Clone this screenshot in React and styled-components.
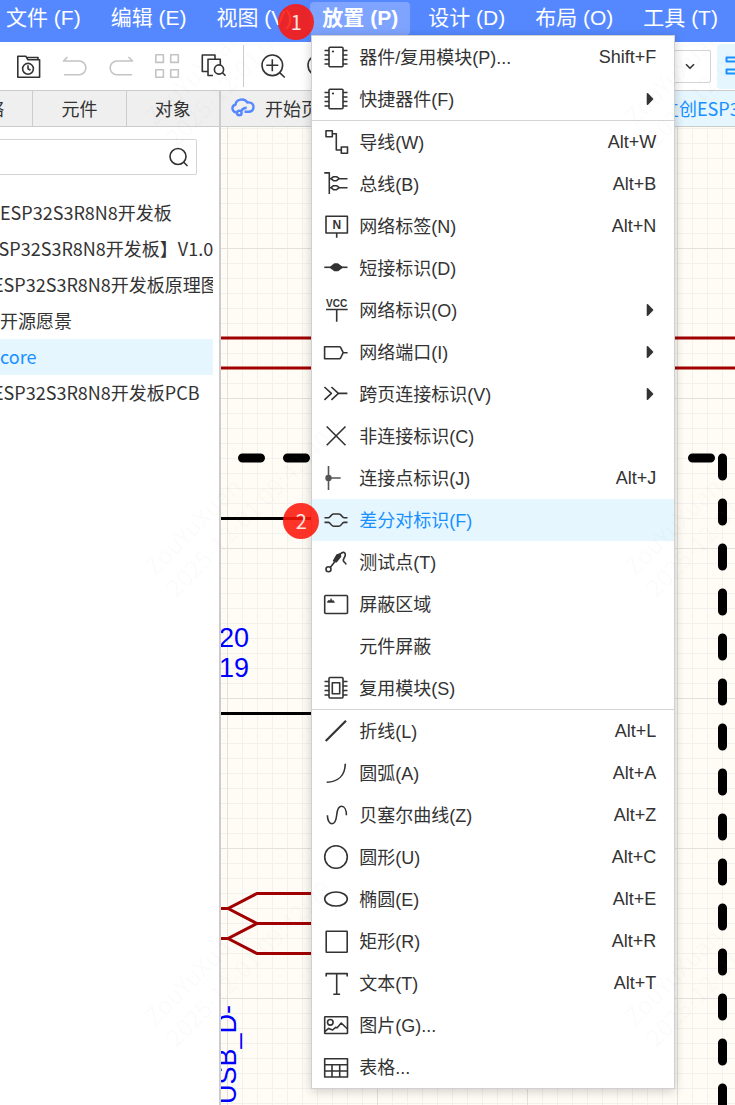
import {useState} from 'react';
import styled, {createGlobalStyle, css} from 'styled-components';

const GlobalStyle = createGlobalStyle`
    * {
        box-sizing: border-box;
    }
    body {
        margin: 0;
        color: #333;
        background: #fff;
        font-family: "Liberation Sans", "Noto Sans CJK SC", sans-serif;
        font-size: 18px;
    }
    button, input, select {
        font: inherit;
        color: inherit;
    }
`

const chipPins = 'M.5 5.5H5M.5 10H5M.5 14.5H5M.5 19H5M19 5.5h4.5M19 10h4.5M19 14.5h4.5M19 19h4.5';

const icons = {
    chip: <><rect x="5" y="2.3" width="14" height="19.4" rx="1" /><path d={chipPins} /><circle cx="9" cy="6.5" r="1.1" fill="currentColor" stroke="none" /></>,
    wire: <path d="M2 .8h6.3v6H2zM8.3 3.8h4V20h5M17.3 17h6.2v6.2h-6.2z" />,
    bus: <path d="M.3.9h5V22M5.3 6.7H7l2.5-2h3l2.8 2-2.8 2h-3L7 6.7M15.3 6.7h8.2M5.3 15.7H7l2.5-2h3l2.8 2-2.8 2h-3l-2.5-2M15.3 15.7h8.2" />,
    label: <><path d="M2 2.2h21.4V19H2zM12.7 19v4.8" /><text x="8.4" y="15" fontSize="12">N</text></>,
    short: <><path d="M.3 11.3h23.2" /><path d="M6.5 11.3l4-3.2h3.2l4.3 3.2-4.3 3.2h-3.2z" fill="currentColor" /></>,
    vcc: <><path d="M2 11.5h21.7M12.7 11.5v12.3" /><text x="2" y="9" fontSize="10">VCC</text></>,
    port: <path d="M.6 6.7h14.8q.8 0 1.2.7l2.6 5.3-2.6 5.3q-.4.7-1.2.7H.6zM19.2 12.7h4.4" />,
    offPage: <path d="M.4 5l7 6.4-7 6.4M7.4 5l7 6.4-7 6.4M14.4 11.4h9" />,
    cross: <path d="M2.7 2.5l18.8 18.8M21.5 2.5L2.7 21.3" />,
    junction: <g stroke="#555"><path d="M4.5 0v24M4.5 12h12.2" /><circle cx="4.5" cy="12" r="2.4" fill="#555" /></g>,
    pair: <path d="M.5 9.8h4C6.5 9.8 7 6 9.5 6H15c2.5 0 3 3.8 5 3.8h3.5M.5 14.4h4c2 0 2.5 3.8 5 3.8H15c2.5 0 3-3.8 5-3.8h3.5" />,
    probe: <><circle cx="4.5" cy="19.3" r="2.5" /><path d="M6.4 17.3L11 11.5M16 4.500C18 1.2 22 1.8 21.2 5.5 20.7 8 18.5 9 19.5 11.2c.6 1.4 2.1 1 2.6 3.3" /><path d="M9.6 10.8L13 5l3-1 .5 2.5-4.2 5.2z" fill="currentColor" /></>,
    region: <><rect x=".7" y="3.5" width="22.8" height="18" rx="1" /><path d="M3.5 10.5V9.3L5 8l1 1 1-2.500L8.5 9l1-.5 1 2z" fill="currentColor" strokeWidth=".5" /></>,
    module: <><rect x="5" y="1.5" width="14" height="20.5" rx="1" /><path d="M8.3 6.7h7.4v11H8.3z" /><path d={chipPins} /></>,
    line: <path d="M1.7 22L22 1.7" strokeWidth="2.2" />,
    arc: <path d="M2.7 21.2C14 21 21 14.5 21.3 2.7" />,
    bezier: <path d="M3.4 12.3c0 5 2 8.4 4.6 8.4 3 0 4.2-3.7 4.7-8.7s1.7-8.7 4.9-8.7c2.9 0 4.8 3.7 4.8 9" />,
    circle: <circle cx="12" cy="12" r="11.3" />,
    ellipse: <ellipse cx="12" cy="12" rx="11.3" ry="7" />,
    rect: <rect x="2.2" y="2.2" width="21" height="21" rx=".5" />,
    text: <path d="M2.2 5.500V2.600h21v2.900M12.7 2.600v20.800M9.3 23.300h6.8" />,
    image: <><rect x=".7" y="3.7" width="22.8" height="16.8" rx=".5" /><circle cx="6.3" cy="9.3" r="2.8" /><path d="M.7 18.600l4-3.200L8.600 17l3-2.600 1.600.4 4-4.800L23.500 16" /></>,
    table: <path d="M.7 3.700h22.800V22H.7zM.7 9.700h22.800M.7 16h22.800M8 9.700V22M15.700 9.700V22" />,
    folder: <><path d="M.8 23.300V2.200h8l2 3.500h11.800v17.600zM10 3.500h11v2.200" /><circle cx="11" cy="14.8" r="5.4" /><path d="M11 11.300v3.500l2.500 1.500" /></>,
    undo: <path d="M4.5 3L.5 7h16.300a6.900 6.900 0 0 1 0 13.700H1" />,
    redo: <path d="M19.5 3l4 4H7.200a6.900 6.900 0 0 0 0 13.700H23" />,
    grid: <path d="M.8.8h7.600v7.600H.8zM15.700.8h7.600v7.600h-7.600zM.8 15.700h7.600v7.600H.8zM15.700 15.700h7.600v7.600h-7.600z" />,
    docSearch: <><path d="M6.5 17.500H1.300V1H14v4M19.300 11V5.300H7v16.200h5" /><circle cx="18" cy="15.5" r="4.6" /><path d="M21.500 18.800l3 3" /></>,
    zoomIn: <><circle cx="11.3" cy="11.3" r="10.3" /><path d="M11.300 5.300v12M5.300 11.300h12M18.700 18.700l5 4.800" /></>,
    zoomOut: <><circle cx="11.3" cy="11.3" r="10.3" /><path d="M5.300 11.300h12M18.700 18.700l5 4.800" /></>,
    search: <><circle cx="12" cy="11.5" r="8" /><path d="M17.500 17l4 4" /></>,
    bars: <path d="M1.500 3.500h21v4h-21zM1.500 15.500h21v4h-21z" strokeWidth="2" />,
    cloud: <g strokeWidth="2.4"><path d="M5 16.500C.4 15.500.2 9.500 4.500 8.700 5 3 13.500 1.500 16.300 6.500c4.200-.8 6.700 2.200 6.200 5.300-.4 2.600-2.400 4-5 4h-4" /><circle cx="8.3" cy="17" r="2.3" /><path d="M10 15.200c1.500-2.500 3.500-3.500 5.700-3.500" /></g>,
    chevron: <path d="M8 10.300l4 4 4-4" />,
    triangle: <path d="M9.500 6.800v10.400l5-5.200z" fill="currentColor" />
}

const menus = ['文件 (F)', '编辑 (E)', '视图 (V)', '放置 (P)', '设计 (D)', '布局 (O)', '工具 (T)'];

const placeMenu = [
    [
        {icon: 'chip', label: '器件/复用模块(P)...', keys: 'Shift+F'},
        {icon: 'chip', label: '快捷器件(F)', sub: true}
    ],
    [
        {icon: 'wire', label: '导线(W)', keys: 'Alt+W'},
        {icon: 'bus', label: '总线(B)', keys: 'Alt+B'},
        {icon: 'label', label: '网络标签(N)', keys: 'Alt+N'},
        {icon: 'short', label: '短接标识(D)'},
        {icon: 'vcc', label: '网络标识(O)', sub: true},
        {icon: 'port', label: '网络端口(I)', sub: true},
        {icon: 'offPage', label: '跨页连接标识(V)', sub: true},
        {icon: 'cross', label: '非连接标识(C)'},
        {icon: 'junction', label: '连接点标识(J)', keys: 'Alt+J'},
        {icon: 'pair', label: '差分对标识(F)', active: true, step: 2},
        {icon: 'probe', label: '测试点(T)'},
        {icon: 'region', label: '屏蔽区域'},
        {label: '元件屏蔽'},
        {icon: 'module', label: '复用模块(S)'}
    ],
    [
        {icon: 'line', label: '折线(L)', keys: 'Alt+L'},
        {icon: 'arc', label: '圆弧(A)', keys: 'Alt+A'},
        {icon: 'bezier', label: '贝塞尔曲线(Z)', keys: 'Alt+Z'},
        {icon: 'circle', label: '圆形(U)', keys: 'Alt+C'},
        {icon: 'ellipse', label: '椭圆(E)', keys: 'Alt+E'},
        {icon: 'rect', label: '矩形(R)', keys: 'Alt+R'},
        {icon: 'text', label: '文本(T)', keys: 'Alt+T'},
        {icon: 'image', label: '图片(G)...'},
        {icon: 'table', label: '表格...'}
    ]
];

const tree = [
    {text: 'ESP32S3R8N8开发板', indent: 60},
    {text: 'ESP32S3R8N8开发板】V1.0', indent: 48},
    {text: 'ESP32S3R8N8开发板原理图', indent: 53},
    {text: '开源愿景', indent: 60},
    {text: 'core', indent: 60},
    {text: 'ESP32S3R8N8开发板PCB', indent: 53}
];

const Icon = ({name}) => (
    <IconSvg viewBox="0 0 24 24" aria-hidden="true">{icons[name]}</IconSvg>
);

const PlaceMenu = () => (
    <Dropdown role="menu">
        {placeMenu.map((group, i) => (
            <Group key={i}>
                {group.map((item) => (
                    <MenuItem key={item.label} role="menuitem" $active={item.active}>
                        <Icon name={item.icon} />
                        <Label>{item.label}</Label>
                        {item.keys && <span>{item.keys}</span>}
                        {item.sub && <Arrow><Icon name="triangle" /></Arrow>}
                        {item.step && <ItemStep>{item.step}</ItemStep>}
                    </MenuItem>
                ))}
            </Group>
        ))}
    </Dropdown>
);

const Schematic = () => (
    <Drawing aria-hidden="true">
        <g stroke="#a00000" strokeWidth="3" fill="none">
            <path d="M0 211h2000M0 241h2000" />
            <path d="M0 781.500h7l29-15h60M7 781.500l29 15h60M0 811.500h7l29-15M7 811.500l29 15h60" />
        </g>
        <path d="M0 391.500h200M0 586.500h200" stroke="#000" strokeWidth="3" />
        <g stroke="#000" strokeWidth="9" strokeLinecap="round" strokeDasharray="18 27">
            <path d="M21.500 331H490" />
            <path d="M501.500 331V2000" />
        </g>
        <g fill="#00f" fontSize="27">
            <text x="-2" y="520">20</text>
            <text x="-2" y="550">19</text>
            <text transform="translate(15 977) rotate(-90)">USB_D-</text>
        </g>
    </Drawing>
);

const Watermark = () => (
    <WatermarkSvg aria-hidden="true">
        {[0, 1, 2].map((row) => [0, 1].map((col) => (
            <g key={`${row}-${col}`} transform={`translate(${155 + col * 480} ${127 + row * 450}) rotate(-45)`}>
                <text>ZouYuXuan</text>
                <text y="30">2025-12-01 09:42:40</text>
            </g>
        )))}
    </WatermarkSvg>
);

const App = () => {
    const [open, setOpen] = useState(true);
    const [selected, setSelected] = useState('core');

    return (
        <Page>
            <GlobalStyle />
            <MenuBar>
                {menus.map((name) => {
                    const isPlace = name === '放置 (P)';
                    return (
                        <MenuSlot key={name}>
                            <MenuButton $open={isPlace && open} onClick={() => isPlace && setOpen(!open)}>
                                {name}
                            </MenuButton>
                            {isPlace && <BarStep>1</BarStep>}
                            {isPlace && open && <PlaceMenu />}
                        </MenuSlot>
                    );
                })}
            </MenuBar>
            <Toolbar>
                <Tools>
                    <Tool aria-label="最近"><Icon name="folder" /></Tool>
                    <Tool aria-label="撤销" disabled><Icon name="undo" /></Tool>
                    <Tool aria-label="重做" disabled><Icon name="redo" /></Tool>
                    <Tool aria-label="网格" disabled><Icon name="grid" /></Tool>
                    <Tool aria-label="查找"><Icon name="docSearch" /></Tool>
                </Tools>
                <Divider />
                <Tools>
                    <Tool aria-label="放大"><Icon name="zoomIn" /></Tool>
                    <Tool aria-label="缩小"><Icon name="zoomOut" /></Tool>
                </Tools>
                <SelectBox>
                    <select aria-label="线宽"><option></option></select>
                    <Icon name="chevron" />
                </SelectBox>
                <ActiveTool aria-label="面板"><Icon name="bars" /></ActiveTool>
            </Toolbar>
            <Workspace>
                <Sidebar>
                    <SideTabs>
                        <SideTab>网络</SideTab>
                        <SideTab>元件</SideTab>
                        <SideTab>对象</SideTab>
                    </SideTabs>
                    <SearchBox>
                        <input aria-label="搜索" type="text" />
                        <Icon name="search" />
                    </SearchBox>
                    <Tree>
                        {tree.map(({text, indent}) => (
                            <li key={text}>
                                <TreeRow $indent={indent} $active={text === selected} onClick={() => setSelected(text)}>
                                    {text}
                                </TreeRow>
                            </li>
                        ))}
                    </Tree>
                </Sidebar>
                <Editor>
                    <DocTabs>
                        <StartTab><Icon name="cloud" />开始页</StartTab>
                        <DocTab>立创ESP32S3R8N8</DocTab>
                    </DocTabs>
                    <Canvas>
                        <Schematic />
                    </Canvas>
                </Editor>
            </Workspace>
            <Watermark />
        </Page>
    );
}

const plainButton = css`
    border: 0;
    padding: 0;
    background: none;
    cursor: pointer;
`

const uiFont = css`
    font-family: "Noto Sans CJK SC", sans-serif;
`

const Page = styled.div`
    position: relative;
    display: flex;
    flex-direction: column;
    min-height: 100vh;
    overflow: hidden;
`

const IconSvg = styled.svg`
    flex: none;
    width: 24px;
    height: 24px;
    overflow: visible;
    fill: none;
    stroke: currentColor;
    stroke-width: 1.6;
    stroke-linejoin: round;

    text {
        fill: currentColor;
        stroke: none;
        font-weight: bold;
    }
`

const MenuBar = styled.nav`
    display: flex;
    gap: 6px;
    height: 42px;
    margin-left: -6px;
    padding-top: 2px;
    background: #5588ff;
`

const MenuSlot = styled.div`
    position: relative;
    flex: none;
    height: 33px;
`

const MenuButton = styled.button`
    ${plainButton}
    height: 100%;
    padding: 0 12px 2px;
    border-radius: 4px;
    color: #fff;
    font-size: 21px;
    line-height: 31px;
    white-space: nowrap;
    background: ${({$open}) => $open ? '#7ea4ff' : 'none'};
    font-weight: ${({$open}) => $open ? 'bold' : 'normal'};
`

const Step = styled.span`
    ${uiFont}
    position: absolute;
    z-index: 3;
    display: flex;
    align-items: center;
    justify-content: center;
    width: 36px;
    height: 36px;
    padding-bottom: 2px;
    border-radius: 50%;
    color: #ffe4e0;
    font-size: 20px;
    background: rgba(255, 22, 9, 0.87);
`

const BarStep = styled(Step)`
    top: 2px;
    left: -32px;
`

const ItemStep = styled(Step)`
    top: 4px;
    left: -29px;
`

const Dropdown = styled.div`
    position: absolute;
    z-index: 2;
    top: 100%;
    left: 1px;
    width: 364px;
    border: 1px solid #d0d0d0;
    background: #fff;
    box-shadow: 0 2px 10px rgba(0, 0, 0, 0.2);
`

const Group = styled.div`
    & + & {
        border-top: 1px solid #d4d4d4;
    }
`

const Label = styled.span`
    flex: 1;
    padding-bottom: 2px;
`

const MenuItem = styled.button`
    ${plainButton}
    position: relative;
    display: flex;
    align-items: center;
    gap: 11px;
    width: 100%;
    height: 42px;
    padding: 0 18px 0 12px;
    text-align: left;
    background: ${({$active}) => $active ? '#e5f6ff' : '#fff'};

    ${Label} {
        color: ${({$active}) => $active ? '#1890ff' : '#333'};
    }
`

const Arrow = styled.span`
    display: flex;
    width: 18px;
`

const Toolbar = styled.div`
    display: flex;
    align-items: center;
    height: 49px;
    margin-right: -18px;
    padding-left: 17px;
    border-bottom: 1px solid #ccc;
    background: #fff;
`

const Tools = styled.div`
    display: flex;
    gap: 22px;
`

const Tool = styled.button`
    ${plainButton}
    display: flex;
    color: ${({disabled}) => disabled ? '#c4c4c4' : '#333'};
`

const Divider = styled.span`
    width: 1px;
    height: 42px;
    margin: 0 17px 0 18px;
    background: #ccc;
`

const SelectBox = styled.div`
    display: flex;
    align-items: center;
    height: 33px;
    margin-left: auto;
    margin-right: 6px;
    padding-right: 8px;
    border: 1px solid #d4d4d4;
    border-radius: 2px;

    select {
        width: 80px;
        height: 100%;
        border: 0;
        appearance: none;
        background: none;
    }
`

const ActiveTool = styled.button`
    ${plainButton}
    display: flex;
    align-items: center;
    width: 36px;
    height: 45px;
    padding-left: 8px;
    border-radius: 4px;
    color: #1890ff;
    background: #e5f6ff;
`

const Workspace = styled.div`
    display: flex;
    flex: 1;
`

const Sidebar = styled.aside`
    ${uiFont}
    flex: none;
    width: 281px;
    margin-left: -60px;
    border-right: 2px solid #ccc;
`

const SideTabs = styled.div`
    display: flex;
    height: 36px;
    border-bottom: 1px solid #ccc;
`

const SideTab = styled.button`
    ${plainButton}
    flex: 1;
    padding-bottom: 2px;
    background: #efefef;

    & + & {
        border-left: 1px solid #ccc;
    }
`

const SearchBox = styled.div`
    display: flex;
    align-items: center;
    height: 36px;
    margin: 12px 22px 20px 12px;
    padding-right: 6px;
    border: 1px solid #d4d4d4;
    border-radius: 2px;

    input {
        flex: 1;
        min-width: 0;
        border: 0;
        outline: none;
    }
`

const Tree = styled.ul`
    margin: 0 6px 0 0;
    padding: 0;
    list-style: none;
`

const TreeRow = styled.button`
    ${plainButton}
    display: block;
    width: 100%;
    height: 36px;
    padding-left: ${({$indent}) => $indent}px;
    padding-bottom: 2px;
    line-height: 34px;
    text-align: left;
    white-space: nowrap;
    overflow: hidden;
    color: ${({$active}) => $active ? '#1890ff' : '#333'};
    background: ${({$active}) => $active ? '#e5f6ff' : 'none'};
`

const Editor = styled.main`
    display: flex;
    flex-direction: column;
    flex: 1;
    min-width: 0;
`

const DocTabs = styled.div`
    ${uiFont}
    display: flex;
    height: 36px;
    overflow: hidden;
    border-bottom: 1px solid #ccc;
    background: #efefef;
`

const StartTab = styled.button`
    ${plainButton}
    display: flex;
    flex: none;
    align-items: center;
    gap: 10px;
    width: 400px;
    padding-left: 10px;
    padding-bottom: 2px;

    svg {
        color: #5588ff;
    }
`

const DocTab = styled.button`
    ${plainButton}
    flex: none;
    padding: 0 40px 2px;
    color: #1890ff;
    background: #e5f6ff;
`

const Canvas = styled.div`
    position: relative;
    flex: 1;
    overflow: hidden;
    background-color: #fffcf6;
    background-image:
        linear-gradient(90deg, #e2e1dd 1px, transparent 1px),
        linear-gradient(#e2e1dd 1px, transparent 1px),
        linear-gradient(90deg, #f2f1ee 1px, transparent 1px),
        linear-gradient(#f2f1ee 1px, transparent 1px);
    background-size: 150px 150px, 150px 150px, 15px 15px, 15px 15px;
    background-position: 6px 121px;
`

const Drawing = styled.svg`
    position: absolute;
    inset: 0;
    width: 100%;
    height: 100%;
`

const WatermarkSvg = styled.svg`
    ${uiFont}
    position: absolute;
    z-index: 4;
    inset: 0;
    width: 100%;
    height: 100%;
    pointer-events: none;
    font-size: 24px;
    fill: rgba(128, 128, 128, 0.04);
`

export default App;
